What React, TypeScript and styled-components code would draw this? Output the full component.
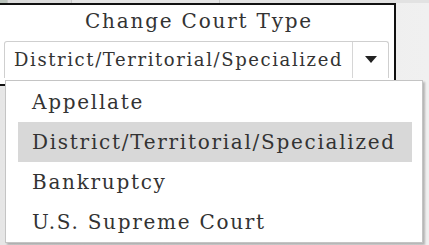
import styled, { createGlobalStyle } from 'styled-components';

const GlobalStyle = createGlobalStyle`
  html, body {
    margin: 0;
    padding: 0;
    background: #ececec;
  }
  * {
    box-sizing: border-box;
  }
`;

const Screen = styled.div`
  position: relative;
  width: 429px;
  height: 245px;
  overflow: hidden;
  background: linear-gradient(90deg, #e6e6e6, #f0f0f0);
  font-family: 'DejaVu Serif', 'Liberation Serif', serif;
  color: #333;
`;

const TopStrip = styled.div`
  display: flex;
  height: 3px;
  background: #e2e2e2;
`;

const Tile = styled.div<{ $w: number; $tone: string }>`
  width: ${({ $w }) => $w}px;
  background: ${({ $tone }) => $tone};
  border-right: 1px solid #c8c8c8;
`;

const Main = styled.div`
  display: flex;
`;

const LeftColumn = styled.div`
  display: flex;
  flex-direction: column;
  width: 396px;
`;

const Panel = styled.div`
  margin-left: -4px;
  height: 83px;
  background: #fff;
  border: 2px solid #111;
  border-left: none;
  padding: 4px 0 0 8px;
`;

const Title = styled.h3`
  margin: 0 0 8px;
  text-align: center;
  font-weight: 400;
  font-size: 20px;
  line-height: 24px;
  letter-spacing: 1.8px;
`;

const SelectBox = styled.div`
  display: flex;
  width: 385px;
  height: 37px;
  border: 1px solid #cfcfcf;
  border-bottom: none;
  border-radius: 3px 3px 0 0;
  background: #fff;
`;

const SelectValue = styled.div`
  flex: 1;
  padding-left: 9px;
  font-size: 18px;
  line-height: 36px;
  letter-spacing: 1.6px;
  white-space: nowrap;
`;

const SelectButton = styled.div`
  display: flex;
  align-items: center;
  justify-content: center;
  width: 36px;
  border-left: 1px solid #d6d6d6;
`;

const Map = styled.div`
  flex: 1;
  height: 160px;
  background: #5a8f4e;
`;

const Dropdown = styled.ul`
  position: absolute;
  left: 5px;
  top: 80px;
  width: 418px;
  height: 163px;
  margin: 0;
  padding: 1px 10px 0 12px;
  list-style: none;
  background: #fff;
  border: 1px solid #c4c4c4;
  box-shadow: 2px 2px 2px rgba(0, 0, 0, 0.25);
`;

const Option = styled.li<{ $active?: boolean }>`
  height: 40px;
  padding-left: 14px;
  font-size: 20px;
  line-height: 40px;
  letter-spacing: 1.72px;
  white-space: nowrap;
  background: ${({ $active }) => ($active ? '#d8d8d8' : 'transparent')};
`;

const options = [
  'Appellate',
  'District/Territorial/Specialized',
  'Bankruptcy',
  'U.S. Supreme Court',
];

export default function App() {
  const selected = 'District/Territorial/Specialized';
  return (
    <Screen>
      <GlobalStyle />
      <TopStrip>
        <Tile $w={8} $tone="#b9c2bb" />
        <Tile $w={64} $tone="#dcdcdc" />
        <Tile $w={148} $tone="#e4e4e4" />
      </TopStrip>
      <Main>
        <LeftColumn>
          <Panel>
            <Title>Change Court Type</Title>
            <SelectBox>
              <SelectValue>{selected}</SelectValue>
              <SelectButton>
                <svg width="12" height="8" viewBox="0 0 12 8">
                  <path d="M0 0h12L6 7z" fill="#222" />
                </svg>
              </SelectButton>
            </SelectBox>
          </Panel>
          <Map />
        </LeftColumn>
      </Main>
      <Dropdown>
        {options.map((o) => (
          <Option key={o} $active={o === selected}>
            {o}
          </Option>
        ))}
      </Dropdown>
    </Screen>
  );
}
